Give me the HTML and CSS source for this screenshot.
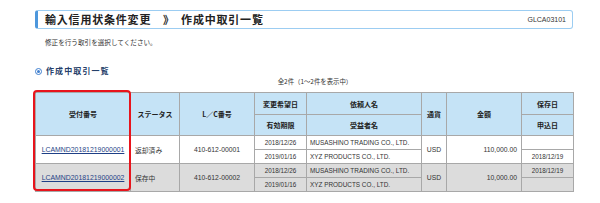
FILE: index.html
```html
<!DOCTYPE html>
<html lang="ja">
<head>
<meta charset="utf-8">
<title>作成中取引一覧</title>
<link rel="stylesheet" href="styles.css">
</head>
<body>
<div class="page">
  <div class="titlebar">
    <h1 class="title">輸入信用状条件変更　》　作成中取引一覧</h1>
    <span class="screen-id">GLCA03101</span>
  </div>
  <p class="note">修正を行う取引を選択してください。</p>
  <h2 class="section"><span class="section-icon"></span>作成中取引一覧</h2>
  <p class="count">全2件（1～2件を表示中）</p>
  <div class="table-wrap">
    <table class="list">
      <colgroup>
        <col class="c1"><col class="c2"><col class="c3"><col class="c4">
        <col class="c5"><col class="c6"><col class="c7"><col class="c8">
      </colgroup>
      <thead>
        <tr class="h1">
          <th rowspan="2">受付番号</th>
          <th rowspan="2">ステータス</th>
          <th rowspan="2">L／C番号</th>
          <th>変更希望日</th>
          <th>依頼人名</th>
          <th rowspan="2">通貨</th>
          <th rowspan="2">金額</th>
          <th>保存日</th>
        </tr>
        <tr class="h2">
          <th>有効期限</th>
          <th>受益者名</th>
          <th>申込日</th>
        </tr>
      </thead>
      <tbody>
        <tr class="r odd">
          <td rowspan="2" class="ctr"><a href="#">LCAMND20181219000001</a></td>
          <td rowspan="2" class="lft">返却済み</td>
          <td rowspan="2" class="ctr">410-612-00001</td>
          <td class="ctr date">2018/12/26</td>
          <td class="lft name">MUSASHINO TRADING CO., LTD.</td>
          <td rowspan="2" class="ctr">USD</td>
          <td rowspan="2" class="rgt">110,000.00</td>
          <td class="ctr date"></td>
        </tr>
        <tr class="r odd">
          <td class="ctr date">2019/01/16</td>
          <td class="lft name">XYZ PRODUCTS CO., LTD.</td>
          <td class="ctr date">2018/12/19</td>
        </tr>
        <tr class="r even">
          <td rowspan="2" class="ctr"><a href="#">LCAMND20181219000002</a></td>
          <td rowspan="2" class="lft">保存中</td>
          <td rowspan="2" class="ctr">410-612-00002</td>
          <td class="ctr date">2018/12/26</td>
          <td class="lft name">MUSASHINO TRADING CO., LTD.</td>
          <td rowspan="2" class="ctr">USD</td>
          <td rowspan="2" class="rgt">10,000.00</td>
          <td class="ctr date">2018/12/19</td>
        </tr>
        <tr class="r even">
          <td class="ctr date">2019/01/16</td>
          <td class="lft name">XYZ PRODUCTS CO., LTD.</td>
          <td class="ctr date"></td>
        </tr>
      </tbody>
    </table>
    <div class="highlight"></div>
  </div>
</div>
</body>
</html>
```

FILE: styles.css
```css
* { box-sizing: border-box; }
html, body { margin: 0; padding: 0; background: #ffffff; }
body {
  font-family: "Liberation Sans", "Noto Sans CJK JP", sans-serif;
  color: #222222;
}
.page {
  width: 600px;
  padding: 10px 27px 0 35px;
}
.titlebar {
  height: 19px;
  border: 1px solid #9ccdf2;
  border-left: 3px solid #4d97dc;
  border-radius: 3px;
  display: flex;
  align-items: center;
  justify-content: space-between;
  padding: 0 6px 0 7px;
}
.title {
  margin: 0;
  font-family: "Noto Sans CJK JP", sans-serif;
  font-size: 11px;
  font-weight: 700;
  letter-spacing: 0.8px;
  line-height: 17px;
  color: #222222;
}
.screen-id {
  font-size: 7px;
  color: #333333;
  line-height: 17px;
}
.note {
  margin: 8px 0 0 10px;
  font-family: "Noto Sans CJK JP", sans-serif;
  font-size: 6.6px;
  line-height: 10px;
  color: #333333;
}
.section {
  margin: 18px 0 0 0;
  display: flex;
  align-items: center;
  font-family: "Noto Sans CJK JP", sans-serif;
  font-size: 8px;
  letter-spacing: 1.1px;
  font-weight: 700;
  line-height: 12px;
  color: #26406a;
}
.section-icon {
  width: 7px;
  height: 7px;
  border-radius: 50%;
  border: 1px solid #3f7fcf;
  margin-right: 4px;
  display: flex;
  align-items: center;
  justify-content: center;
}
.section-icon::after {
  content: "";
  width: 3px;
  height: 3px;
  border-radius: 50%;
  background: #3f7fcf;
}
.count {
  margin: 1px 0 6px 0;
  padding-left: 22px;
  text-align: center;
  font-family: "Noto Sans CJK JP", sans-serif;
  font-size: 6.4px;
  line-height: 8px;
  color: #333333;
}
.table-wrap {
  position: relative;
  width: 538px;
}
.list {
  width: 538px;
  table-layout: fixed;
  border-collapse: collapse;
  font-size: 6.8px;
}
.c1 { width: 95px; }
.c2 { width: 49px; }
.c3 { width: 75px; }
.c4 { width: 52px; }
.c5 { width: 115px; }
.c6 { width: 25px; }
.c7 { width: 75px; }
.c8 { width: 52px; }
.list th, .list td {
  border: 1px solid #a8a8a8;
  padding: 0;
  line-height: 8px;
  white-space: nowrap;
  overflow: hidden;
}
.list th {
  background: #c5e3f6;
  font-family: "Noto Sans CJK JP", sans-serif;
  font-weight: 700;
  font-size: 7px;
  color: #222222;
  text-align: center;
}
.h1 th { height: 22px; }
.h2 th { height: 21px; }
.r td { height: 14px; color: #333333; }
.odd td { background: #ffffff; }
.even td { background: #dcdcdc; }
.ctr { text-align: center; }
.lft { text-align: left; padding-left: 4px !important; font-family: "Noto Sans CJK JP", "Liberation Sans", sans-serif; }
.rgt { text-align: right; padding-right: 4px !important; }
.name { font-family: "Liberation Sans", sans-serif; font-size: 6.4px; padding-left: 3px !important; }
.date { font-size: 6.3px; }
.list a {
  color: #1e3f86;
  text-decoration: underline;
  font-size: 6.9px;
}
.highlight {
  position: absolute;
  left: -2px;
  top: -2px;
  width: 98px;
  height: 101px;
  border: 2px solid #e8141c;
  border-radius: 4px;
  pointer-events: none;
}
```
